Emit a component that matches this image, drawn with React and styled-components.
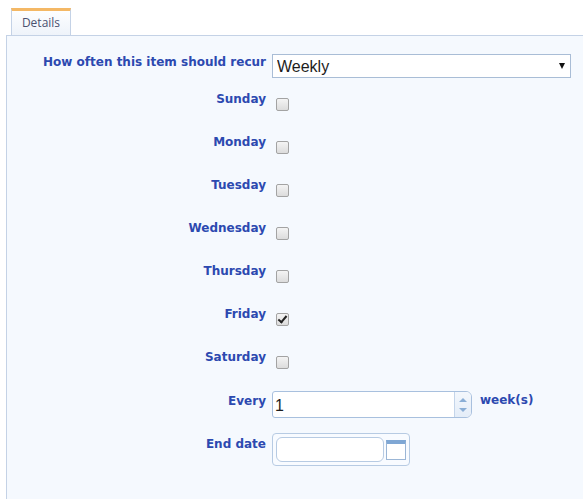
import React, { useState } from "react";
import styled, { createGlobalStyle } from "styled-components";

const GlobalStyle = createGlobalStyle`
  html, body {
    margin: 0;
    padding: 0;
    background: #ffffff;
    font-family: "DejaVu Sans", Verdana, sans-serif;
  }
`;

const Page = styled.div`
  padding: 8px 0 0 6px;
  height: 499px;
  box-sizing: border-box;
  overflow: hidden;
`;

const TabStrip = styled.div`
  display: flex;
  padding-left: 5px;
  height: 27px;
`;

const Tab = styled.div`
  width: 60px;
  box-sizing: border-box;
  border-top: 3px solid #f4b865;
  border-left: 1px solid #c4d2e6;
  border-right: 1px solid #c4d2e6;
  background: linear-gradient(#fdfeff, #eef3fa);
  font-family: "Open Sans", "Liberation Sans", Arial, sans-serif;
  font-size: 12px;
  color: #4b5170;
  display: flex;
  align-items: center;
  justify-content: center;
  padding-bottom: 1px;
`;

const Panel = styled.div`
  border-top: 1px solid #c4d2e6;
  border-left: 1px solid #c4d2e6;
  background: #f5f9fe;
  height: 600px;
  padding-top: 17px;
`;

const Row = styled.div`
  display: grid;
  grid-template-columns: 259px auto;
  column-gap: 6px;
  height: ${(p) => p.$h || 43}px;
  align-items: start;
`;

const Label = styled.div`
  text-align: right;
  font-weight: bold;
  font-size: 12px;
  line-height: 16px;
  color: #2c49b0;
  padding-top: ${(p) => p.$top || 0}px;
`;

const Controls = styled.div`
  display: flex;
  align-items: flex-start;
  gap: 8px;
  margin-top: ${(p) => p.$top || 0}px;
`;

const SelectWrap = styled.div`
  position: relative;
  width: 299px;
  height: 24px;
`;

const Select = styled.select`
  appearance: none;
  width: 100%;
  height: 100%;
  box-sizing: border-box;
  border: 1px solid #a9bdd6;
  background: #fff;
  font-family: "Liberation Sans", Arial, sans-serif;
  font-size: 16px;
  color: #1d1d1d;
  padding: 0 0 0 4px;
  margin: 0;
  outline: none;
`;

const Arrow = styled.span`
  position: absolute;
  right: 6px;
  top: 9px;
  width: 0;
  height: 0;
  border-left: 3px solid transparent;
  border-right: 3px solid transparent;
  border-top: 6px solid #111;
  pointer-events: none;
`;

const Check = styled.input.attrs({ type: "checkbox" })`
  appearance: none;
  width: 13px;
  height: 13px;
  margin: 0 0 0 4px;
  box-sizing: border-box;
  border: 1px solid #a3a3a3;
  border-radius: 2px;
  background: linear-gradient(#f4f4f4, #dcdcdc);
  position: relative;
  &:checked::after {
    content: "";
    position: absolute;
    left: 3px;
    top: 0px;
    width: 3px;
    height: 7px;
    border-right: 2px solid #222;
    border-bottom: 2px solid #222;
    transform: rotate(40deg);
  }
`;

const SpinBox = styled.div`
  display: flex;
  width: 200px;
  height: 27px;
  box-sizing: border-box;
  border: 1px solid #a8c0de;
  border-radius: 3px 6px 6px 3px;
  background: #fff;
  overflow: hidden;
`;

const SpinInput = styled.input`
  flex: 1;
  min-width: 0;
  border: none;
  outline: none;
  padding: 3px 0 0 2px;
  font-family: "Liberation Sans", Arial, sans-serif;
  font-size: 16px;
  color: #1d1d1d;
  background: transparent;
`;

const SpinButtons = styled.div`
  width: 16px;
  border-left: 1px solid #c4d5ea;
  background: linear-gradient(#f3f7fc, #e4edf8);
  display: flex;
  flex-direction: column;
  align-items: center;
  justify-content: center;
  gap: 6px;
`;

const Tri = styled.span`
  width: 0;
  height: 0;
  border-left: 4px solid transparent;
  border-right: 4px solid transparent;
  ${(p) =>
    p.$up
      ? "border-bottom: 4px solid #8aaed6;"
      : "border-top: 4px solid #8aaed6;"}
`;

const Unit = styled.span`
  font-weight: bold;
  font-size: 12px;
  line-height: 16px;
  color: #2c49b0;
  padding-top: 1px;
`;

const DateBox = styled.div`
  display: flex;
  align-items: center;
  gap: 2px;
  width: 138px;
  height: 33px;
  box-sizing: border-box;
  padding: 0 3px;
  border: 1px solid #b7cbe3;
  border-radius: 4px;
  background: #f8fbff;
`;

const DateInput = styled.input`
  width: 108px;
  height: 25px;
  box-sizing: border-box;
  border: 1px solid #b7cbe3;
  border-radius: 6px;
  background: #fff;
  outline: none;
  margin: 0;
`;

const CalButton = styled.div`
  width: 20px;
  height: 20px;
  box-sizing: border-box;
  border: 1px solid #9bb6d6;
  border-top: 4px solid #7fa7d4;
  background: #fff;
`;

const days = [
  "Sunday",
  "Monday",
  "Tuesday",
  "Wednesday",
  "Thursday",
  "Friday",
  "Saturday",
];

export default function App() {
  const [checked, setChecked] = useState({ Friday: true });
  const [every, setEvery] = useState("1");

  return (
    <>
      <GlobalStyle />
      <Page>
        <TabStrip>
          <Tab>Details</Tab>
        </TabStrip>
        <Panel>
          <Row $h={37}>
            <Label $top={1}>How often this item should recur</Label>
            <Controls $top={1}>
              <SelectWrap>
                <Select defaultValue="Weekly">
                  <option>Daily</option>
                  <option>Weekly</option>
                  <option>Monthly</option>
                  <option>Yearly</option>
                </Select>
                <Arrow />
              </SelectWrap>
            </Controls>
          </Row>
          {days.map((d) => (
            <Row key={d}>
              <Label $top={1}>{d}</Label>
              <Controls $top={8}>
                <Check
                  checked={!!checked[d]}
                  onChange={() => setChecked({ ...checked, [d]: !checked[d] })}
                />
              </Controls>
            </Row>
          ))}
          <Row>
            <Label $top={2}>Every</Label>
            <Controls>
              <SpinBox>
                <SpinInput value={every} onChange={(e) => setEvery(e.target.value)} />
                <SpinButtons>
                  <Tri $up />
                  <Tri />
                </SpinButtons>
              </SpinBox>
              <Unit>week(s)</Unit>
            </Controls>
          </Row>
          <Row>
            <Label $top={2}>End date</Label>
            <Controls $top={-1}>
              <DateBox>
                <DateInput />
                <CalButton />
              </DateBox>
            </Controls>
          </Row>
        </Panel>
      </Page>
    </>
  );
}
